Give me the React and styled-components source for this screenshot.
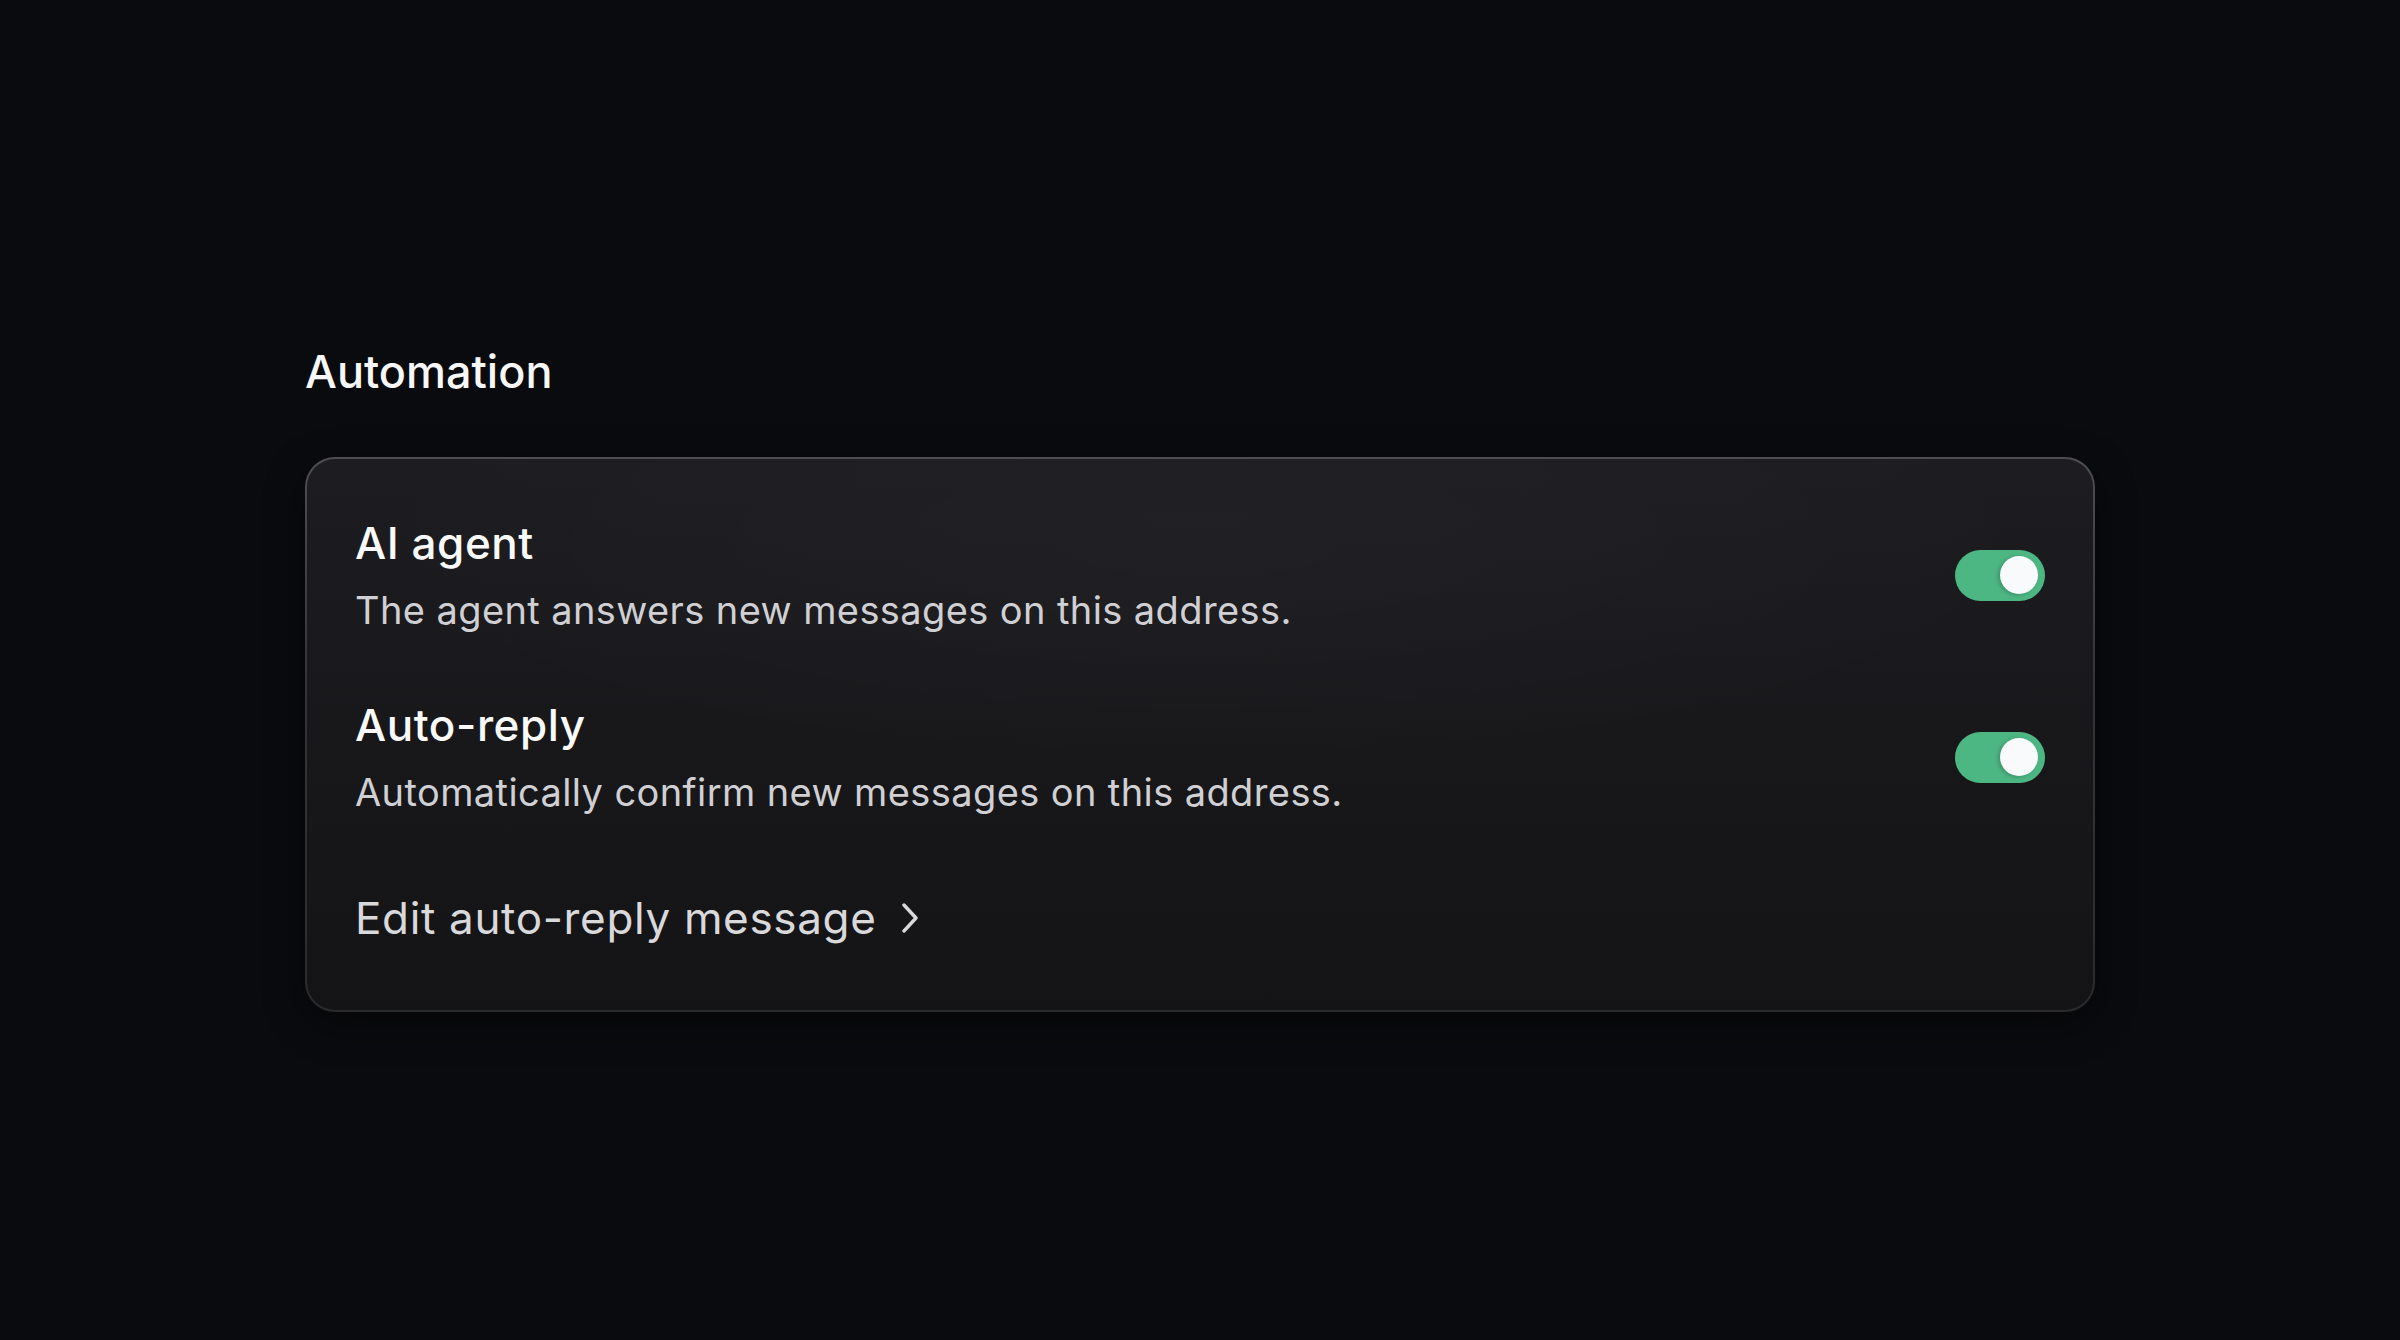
import React from "react";
import styled, { createGlobalStyle } from "styled-components";

const Global = createGlobalStyle`
  html, body { margin: 0; padding: 0; background: #0a0b0e; }
  body { font-family: Inter, "Noto Sans", "Liberation Sans", sans-serif; -webkit-font-smoothing: antialiased; }
`;

const Page = styled.main`
  min-height: 1340px;
  box-sizing: border-box;
  padding: 345px 0 0 305px;
  background: #0a0b0e;
`;

const Section = styled.section`
  width: 1790px;
  display: flex;
  flex-direction: column;
  gap: 58px;
`;

const Heading = styled.h2`
  margin: 0;
  font-size: 45px;
  line-height: 54px;
  font-weight: 500;
  color: #f7f7f8;
  letter-spacing: 0;
`;

const Card = styled.div`
  box-sizing: border-box;
  border: 2px solid transparent;
  border-radius: 30px;
  padding: 58px 48px 66px 48px;
  background:
    radial-gradient(ellipse 70% 60% at 50% 15%, rgba(255,255,255,0.025), rgba(255,255,255,0) 70%) padding-box,
    linear-gradient(180deg, #1d1d21 0%, #18181b 50%, #141416 100%) padding-box,
    linear-gradient(180deg, #4d4d52 0%, #353539 40%, #2a2a2d 100%) border-box;
  box-shadow: 0 12px 40px rgba(0, 0, 0, 0.45);
  display: flex;
  flex-direction: column;
`;

const Row = styled.div`
  display: flex;
  align-items: center;
  justify-content: space-between;
  margin-top: ${(p) => (p.$first ? "0" : "66px")};
`;

const Texts = styled.div`
  display: flex;
  flex-direction: column;
  gap: 18px;
`;

const Title = styled.div`
  font-size: 44px;
  line-height: 52px;
  font-weight: 450;
  letter-spacing: 0.55px;
  color: #fafafa;
`;

const Desc = styled.div`
  font-size: 38px;
  line-height: 46px;
  font-weight: 400;
  letter-spacing: 0.4px;
  color: #d0d0d4;
`;

const Toggle = styled.button`
  position: relative;
  width: 90px;
  height: 51px;
  flex: none;
  border: none;
  padding: 0;
  border-radius: 26px;
  background: ${(p) => (p.$on ? "#4db784" : "#3a3a3f")};
  cursor: pointer;
`;

const Knob = styled.span`
  position: absolute;
  top: 6.5px;
  left: ${(p) => (p.$on ? "45px" : "7px")};
  width: 38px;
  height: 38px;
  border-radius: 50%;
  background: #f8fafc;
  box-shadow: -2px 1px 4px rgba(0, 0, 0, 0.22);
`;

const LinkRow = styled.a`
  margin-top: 77px;
  display: inline-flex;
  align-items: center;
  gap: 26px;
  align-self: flex-start;
  font-size: 44px;
  line-height: 52px;
  font-weight: 400;
  letter-spacing: 0.65px;
  color: #d9d9dc;
  text-decoration: none;
  cursor: pointer;
`;

const Chevron = () => (
  <svg width="16" height="30" viewBox="0 0 16 30" fill="none">
    <polyline points="2,2 14,15 2,28" stroke="#d9d9dc" strokeWidth="3.4" strokeLinecap="round" strokeLinejoin="round" />
  </svg>
);

const Setting = ({ title, desc, on, first }) => (
  <Row $first={first}>
    <Texts>
      <Title>{title}</Title>
      <Desc>{desc}</Desc>
    </Texts>
    <Toggle $on={on} aria-pressed={on}>
      <Knob $on={on} />
    </Toggle>
  </Row>
);

export default function App() {
  return (
    <>
      <Global />
      <Page>
        <Section>
          <Heading>Automation</Heading>
          <Card>
            <Setting first title="AI agent" desc="The agent answers new messages on this address." on />
            <Setting title="Auto-reply" desc="Automatically confirm new messages on this address." on />
            <LinkRow>
              Edit auto-reply message
              <Chevron />
            </LinkRow>
          </Card>
        </Section>
      </Page>
    </>
  );
}
